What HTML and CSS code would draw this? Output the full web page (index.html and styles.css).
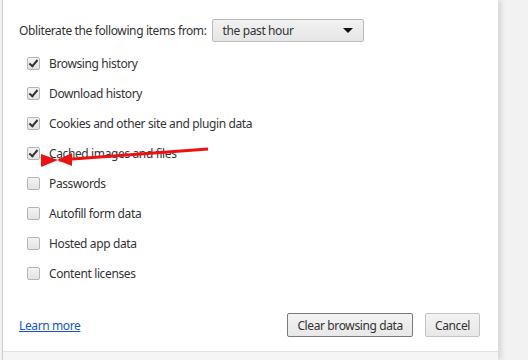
FILE: index.html
```html
<!DOCTYPE html>
<html lang="en">
<head>
    <meta charset="UTF-8">
    <title>Clear browsing data</title>
    <link rel="stylesheet" href="styles.css">
</head>
<body>
    <div class="dialog">
        <div class="content">
            <div class="period-row">
                <span class="period-label">Obliterate the following items from:</span>
                <div class="select">
                    <span>the past hour</span>
                    <span class="caret"></span>
                </div>
            </div>

            <ul class="items">
                <li><span class="check checked"></span>Browsing history</li>
                <li><span class="check checked"></span>Download history</li>
                <li><span class="check checked"></span>Cookies and other site and plugin data</li>
                <li><span class="check checked"></span>Cached images and files</li>
                <li><span class="check"></span>Passwords</li>
                <li><span class="check"></span>Autofill form data</li>
                <li><span class="check"></span>Hosted app data</li>
                <li><span class="check"></span>Content licenses</li>
            </ul>

            <div class="actions">
                <a href="#" class="learn">Learn more</a>
                <div class="buttons">
                    <button class="btn btn-default">Clear browsing data</button>
                    <button class="btn">Cancel</button>
                </div>
            </div>
        </div>
        <div class="footer"></div>

        <!-- red annotation arrow -->
        <svg class="arrow" width="220" height="30" viewBox="0 0 220 30">
            <line x1="58" y1="15" x2="207" y2="4" stroke="#ee1111" stroke-width="3"/>
            <polygon points="40,9 57,15 40,22" fill="#ee1111"/>
            <polygon points="56,15 71,8 71,21" fill="#ee1111"/>
        </svg>
    </div>
</body>
</html>
```

FILE: styles.css
```css
body {
    margin: 0;
    background: #f2f2f2;
    font-family: "Noto Sans", "Open Sans", sans-serif;
    font-size: 12px;
    letter-spacing: -0.38px;
    color: #333;
}
.dialog {
    position: relative;
    width: 495px;
    height: 360px;
    margin-left: 2px;
    background: white;
    box-shadow: 3px 0 5px rgba(0,0,0,0.12);
    border-left: 1px solid #cfcfcf;
    display: flex;
    flex-direction: column;
}
.content {
    flex: 1;
    padding: 19px 18px 0 16px;
}
.period-row {
    display: flex;
    align-items: center;
    height: 23px;
}
.period-label {
    margin-right: 5px;
}
.select {
    height: 21px;
    width: 130px;
    border: 1px solid #bbb;
    border-radius: 2px;
    background: linear-gradient(#f1f1f1, #e6e6e6);
    display: flex;
    align-items: center;
    justify-content: space-between;
    padding: 0 10px 0 10px;
}
.caret {
    width: 0;
    height: 0;
    border-left: 5px solid transparent;
    border-right: 5px solid transparent;
    border-top: 5px solid #111;
}
.items {
    list-style: none;
    margin: 6px 0 0 0;
    padding: 0 0 0 8px;
}
.items li {
    height: 30px;
    display: flex;
    align-items: center;
}
.check {
    width: 11px;
    height: 11px;
    border: 1px solid #b5b5b5;
    border-radius: 2px;
    background: linear-gradient(#f3f3f3, #e3e3e3);
    margin-right: 9px;
    position: relative;
}
.check.checked::after {
    content: "";
    position: absolute;
    left: 3px;
    top: 0px;
    width: 3px;
    height: 7px;
    border-right: 2px solid #333;
    border-bottom: 2px solid #333;
    transform: rotate(40deg);
}
.actions {
    margin-top: 25px;
    display: flex;
    align-items: center;
    justify-content: space-between;
}
.learn {
    color: #1155cc;
    text-decoration: underline;
}
.buttons {
    display: flex;
    gap: 12px;
}
.btn {
    font-family: inherit;
    font-size: 12px;
    letter-spacing: -0.38px;
    color: #333;
    height: 24px;
    padding: 0 9px;
    border: 1px solid #c4c4c4;
    border-radius: 2px;
    background: linear-gradient(#f3f3f3, #e8e8e8);
}
.btn-default {
    border-color: #7a7a7a;
}
.footer {
    height: 8px;
    background: #f5f5f5;
    border-top: 1px solid #e2e2e2;
}
.arrow {
    position: absolute;
    left: -2px;
    top: 145px;
}
```
